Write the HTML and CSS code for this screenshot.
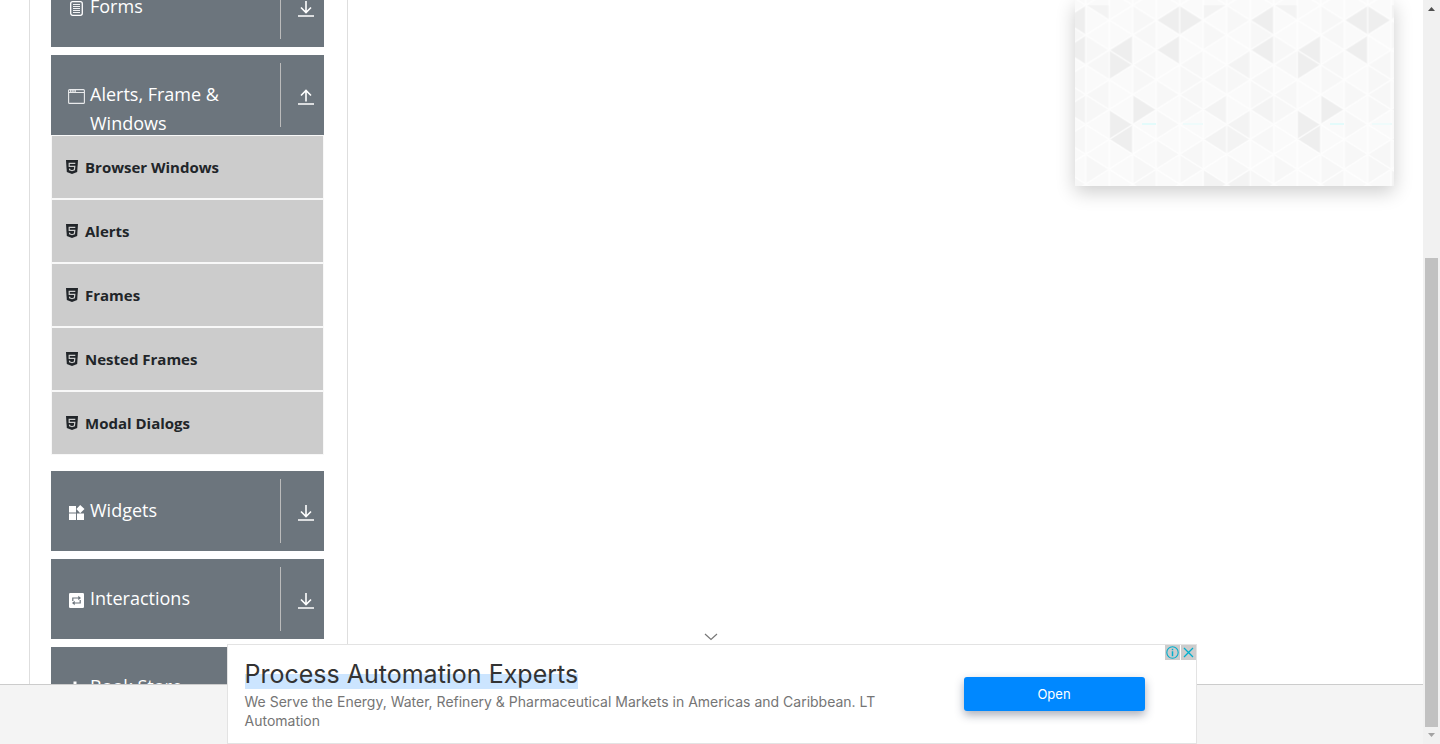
FILE: index.html
```
<!DOCTYPE html>
<html lang="en">
<head>
<meta charset="utf-8">
<title>Alerts, Frame &amp; Windows</title>
<link rel="stylesheet" href="styles.css">
</head>
<body>
<svg class="sprites" aria-hidden="true">
  <symbol id="arrow-down" viewBox="0 0 16 16"><path d="M8 0v11M3 6.500l5 5 5-5M0 15h16" fill="none" stroke="currentColor" stroke-width="1.600"/></symbol>
  <symbol id="arrow-up" viewBox="0 0 16 16"><path d="M8 12.500V1.500M3 6.500l5-5 5 5M0 15h16" fill="none" stroke="currentColor" stroke-width="1.600"/></symbol>
  <symbol id="html5" viewBox="0 0 12 14"><path fill="currentColor" d="M0 0h12l-.8 12L6 14l-5.200-2z"/><path d="M9.300 3.300H3.200v3h5.600l-.4 3.500L6 10.700l-2.400-.9-.1-1.200" fill="none" stroke="#ccc" stroke-width="1.200"/></symbol>
</svg>
<div class="window">
  <div class="page">
    <main class="content">
      <nav class="sidebar">
        <button class="group" type="button">
          <svg class="group-icon" viewBox="0 0 17 17"><rect x="2.700" y="1.700" width="11.600" height="13.600" rx="2" fill="none" stroke="currentColor" stroke-width="1.300"/><path d="M5 4.500h7M5 6.500h7M5 8.500h7M5 10.500h7M5 12.500h7" stroke="currentColor" stroke-width=".9"/></svg>
          <span class="group-name">Forms</span>
          <span class="toggle"><svg class="arrow"><use href="#arrow-down"/></svg></span>
        </button>
        <button class="group open" type="button">
          <svg class="group-icon" viewBox="0 0 17 17"><rect x=".6" y="1.600" width="15.800" height="13.800" rx="1" fill="none" stroke="currentColor" stroke-width="1.100" opacity=".85"/><path d="M1 4.500h15" stroke="currentColor" opacity=".85"/><path d="M2 3h6" stroke="currentColor" stroke-width="1.400" stroke-dasharray="1.500 .7"/></svg>
          <span class="group-name">Alerts, Frame &amp; Windows</span>
          <span class="toggle"><svg class="arrow"><use href="#arrow-up"/></svg></span>
        </button>
        <ul class="items">
          <li><a class="item" href="#"><svg class="item-icon"><use href="#html5"/></svg>Browser Windows</a></li>
          <li><a class="item" href="#"><svg class="item-icon"><use href="#html5"/></svg>Alerts</a></li>
          <li><a class="item" href="#"><svg class="item-icon"><use href="#html5"/></svg>Frames</a></li>
          <li><a class="item" href="#"><svg class="item-icon"><use href="#html5"/></svg>Nested Frames</a></li>
          <li><a class="item" href="#"><svg class="item-icon"><use href="#html5"/></svg>Modal Dialogs</a></li>
        </ul>
        <button class="group" type="button">
          <svg class="group-icon" viewBox="0 0 17 17"><path fill="currentColor" d="M1 2h7v6.500H1zM1 9.500h7V16H1zM9 9.500h7V16H9zM12.200.9l4.300 4.200-4.300 4.200L8.400 5.100z"/></svg>
          <span class="group-name">Widgets</span>
          <span class="toggle"><svg class="arrow"><use href="#arrow-down"/></svg></span>
        </button>
        <button class="group" type="button">
          <svg class="group-icon" viewBox="0 0 17 17"><rect x="1" y="1" width="15" height="15" rx="1.200" fill="currentColor"/><path d="M4.800 9V6h6.500M12.200 8v3H5.700" fill="none" stroke="#6c757d" stroke-width="1.200"/><path fill="#6c757d" d="M10.300 3.700L13 6l-2.700 2.300zM6.700 8.700L4 11l2.700 2.300z"/></svg>
          <span class="group-name">Interactions</span>
          <span class="toggle"><svg class="arrow"><use href="#arrow-down"/></svg></span>
        </button>
        <button class="group" type="button">
          <svg class="group-icon" viewBox="0 0 17 17"><path fill="currentColor" d="M.5 7.500h2V16h-2zM5.500 1.500h3V16h-3zM10.500 6h2v10h-2z"/></svg>
          <span class="group-name">Book Store Application</span>
          <span class="toggle"><svg class="arrow"><use href="#arrow-down"/></svg></span>
        </button>
      </nav>
      <aside class="banner">
        <svg class="banner-art" viewBox="0 0 319 186" preserveAspectRatio="xMidYMax slice">
          <defs>
            <pattern id="triangles" width="8" height="14" patternUnits="userSpaceOnUse" patternTransform="translate(10.700 5.300) scale(23.500 14.900)">
              <path fill="#fafafa" d="M0 0h8v14H0z"/>
              <path fill="#f7f7f7" d="M1 5v2L0 6zM0 2v2l1-1zM1 3v2L0 4zM2 4v2l1-1zM3 3v2L2 4zM5 3v2L4 4zM4 4v2l1-1zM6 4v2L5 5zM0 6v2l1-1zM3 5v2l1-1zM5 5v2L4 6zM6 4v2l1-1zM6 0v2l1-1zM8 4v2L7 5zM8 8v2L7 9zM3 7v2l1-1zM4 6v2l1-1zM7 1v2l1-1zM0 10v2l1-1zM2 10v2l1-1zM3 9v2l1-1zM5 9v2l-1-1zM6 10v2l1-1zM7 11v2l1-1zM4 10v2l1-1zM3 11v2l-1-1zM2 0v2l1-1zM3 1v2L2 2zM5 1v2l1-1zM7 5v2l1-1z"/>
              <path fill="#f3f3f3" d="M7 3v2L6 4zM7 7v2L6 8zM6 8v2L5 9zM6 8v2l1-1zM5 11v2l1-1zM7 11v2l-1-1zM8 6v2L7 7zM6 6v2L5 7zM5 0v1l1-1zM1 0v1L0 0z"/>
              <path fill="#eee" d="M4 0v2L3 1zM4 0v2l1-1zM8 0v2L7 1zM8 2v2L7 3zM2 2v2L1 3zM1 3v2l1-1zM4 2v2L3 3zM2 6v2l1-1zM1 7v2l1-1zM2 8v2L1 9z"/>
              <g fill="none" stroke="#fff" opacity=".75">
                <path stroke-width=".06" d="M0 0v14M1 0v14M2 0v14M3 0v14M4 0v14M5 0v14M6 0v14M7 0v14M8 0v14"/>
                <path stroke-width=".08" d="M0 0l8 8M0 2l8 8M0 4l8 8M0 6l8 8M0 8l6 6M0 10l4 4M0 12l2 2M2 0l6 6M4 0l4 4M6 0l2 2M8 0L0 8M8 2l-8 8M8 4l-8 8M8 6l-8 8M8 8l-6 6M8 10l-4 4M8 12l-2 2M6 0L0 6M4 0L0 4M2 0L0 2"/>
              </g>
            </pattern>
          </defs>
          <rect width="319" height="186" fill="url(#triangles)"/>
          <path d="M67 124h14M255 124h14" stroke="#e3fbfb" stroke-width="2"/>
          <path d="M108 124h20M297 124h20" stroke="#effbfb" stroke-width="2"/>
        </svg>
      </aside>
    </main>
    <footer class="footer"></footer>
    <section class="ad">
      <button class="collapse" type="button" aria-label="Collapse ad"><svg class="chevron" viewBox="0 0 14 8"><path d="M1 1l6 5.500L13 1" fill="none" stroke="#777" stroke-width="1.200"/></svg></button>
      <div class="ad-card">
        <div class="ad-copy">
          <a class="ad-title" href="#">Process Automation Experts</a>
          <p class="ad-text">We Serve the Energy, Water, Refinery &amp; Pharmaceutical Markets in Americas and Caribbean. LT Automation</p>
        </div>
        <button class="ad-open" type="button">Open</button>
        <div class="ad-choices">
          <button class="choice" type="button" aria-label="Ad information"><svg viewBox="0 0 15 15"><circle cx="7.500" cy="7.500" r="5.700" fill="none" stroke="#00aecd" stroke-width="1.100"/><path d="M7.500 3.800v1.500M7.500 6.300v5" stroke="#00aecd" stroke-width="1.500"/></svg></button>
          <button class="choice" type="button" aria-label="Close ad"><svg viewBox="0 0 15 15"><path d="M3 3l9 9M12 3l-9 9" stroke="#00aecd" stroke-width="1.300"/></svg></button>
        </div>
      </div>
    </section>
  </div>
  <div class="scrollbar" aria-hidden="true">
    <svg class="scroll-arrow" viewBox="0 0 17 17"><path fill="#505050" d="M5 11l3.500-4L12 11z"/></svg>
    <div class="track"><div class="thumb"></div></div>
    <svg class="scroll-arrow" viewBox="0 0 17 17"><path fill="#a3a3a3" d="M5 6l3.500 4L12 6z"/></svg>
  </div>
</div>
</body>
</html>
```
FILE: styles.css
```
* { box-sizing: border-box; }
body {
  margin: 0;
  background: #fff;
  color: #212529;
  font-family: "Open Sans", "Noto Sans", sans-serif;
}
button { border: 0; padding: 0; margin: 0; font: inherit; color: inherit; background: none; cursor: pointer; }
a { color: inherit; text-decoration: none; }
.sprites { display: none; }
.window { display: flex; height: 100vh; overflow: hidden; }
.page { position: relative; flex: 1; min-width: 0; display: flex; flex-direction: column; }
.content {
  flex: 1;
  min-height: 0;
  overflow: hidden;
  display: flex;
  justify-content: space-between;
  align-items: flex-start;
  padding: 0 29px;
}
.footer { height: 60px; background: #f4f4f4; border-top: 1px solid #ccc; }

.sidebar {
  width: 319px;
  margin-top: -33px;
  padding: 0 23px 0 21px;
  border: solid #dedede;
  border-width: 0 1px;
  display: flex;
  flex-direction: column;
}
.group {
  display: flex;
  align-items: flex-start;
  height: 80px;
  margin-bottom: 8px;
  padding: 8px 10px 8px 17px;
  background: #6c757d;
  color: #fff;
  font-size: 18px;
  line-height: 29px;
  text-align: left;
}
.group.open { margin-bottom: 0; }
.group-icon { flex: none; width: 17px; height: 17px; margin: 25px 5px 0 0; }
.group-name { flex: 1; padding-top: 17px; }
.toggle {
  flex: none;
  align-self: stretch;
  width: 34px;
  display: flex;
  align-items: center;
  justify-content: flex-end;
  padding-top: 4px;
  border-left: 1px solid #bbb;
}
.arrow { width: 16px; height: 16px; }
.items { margin: 0 0 16px; padding: 0; list-style: none; }
.item {
  display: flex;
  align-items: center;
  height: 64px;
  padding: 0 14px;
  border: 1px solid #f8f8f8;
  background: #ccc;
  font-size: 15px;
  font-weight: 700;
}
.item-icon { width: 12px; height: 14px; margin-right: 7px; }

.banner { width: 319px; height: 186px; box-shadow: 0 6px 18px rgba(0, 0, 0, .2); }
.banner-art { display: block; width: 100%; height: 100%; }

.ad {
  position: absolute;
  left: 0;
  right: 0;
  bottom: 0;
  display: flex;
  flex-direction: column;
  align-items: center;
}
.collapse { display: flex; padding: 0 2px 3px 0; }
.chevron { width: 14px; height: 8px; }
.ad-card {
  position: relative;
  display: flex;
  align-items: center;
  justify-content: space-between;
  width: 970px;
  max-width: 100%;
  height: 100px;
  padding: 0 51px 0 17px;
  border: 1px solid #e3e3e3;
  background: #fff;
}
.ad-copy { width: 660px; }
.ad-title {
  color: #333;
  font: 400 25px/30px Inter, sans-serif;
  background: linear-gradient(transparent 50%, #cce5ff 50%);
}
.ad-text { margin: 3px 0 0; color: #757575; font: 400 14px/19px Inter, sans-serif; }
.ad-open {
  width: 181px;
  height: 34px;
  border-radius: 3px;
  background: #0088ff;
  color: #fff;
  font: 400 13px/34px Inter, sans-serif;
  box-shadow: 0 4px 10px rgba(40, 50, 80, .4);
}
.ad-choices { position: absolute; top: 0; right: 0; display: flex; gap: 1px; }
.choice { display: flex; width: 15px; height: 15px; background: #ccc; }

.scrollbar { flex: none; width: 17px; display: flex; flex-direction: column; background: #f1f1f1; }
.scroll-arrow { flex: none; width: 17px; height: 17px; }
.track { flex: 1; display: flex; flex-direction: column; justify-content: flex-end; padding: 0 2px; }
.thumb { height: 66%; background: #c1c1c1; }
```
